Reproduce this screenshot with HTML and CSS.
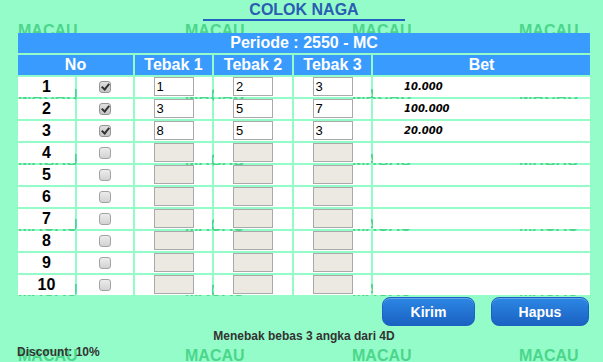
FILE: index.html
```html
<!DOCTYPE html>
<html lang="id">
<head>
<meta charset="utf-8">
<title>Colok Naga</title>
<link rel="stylesheet" href="styles.css">
</head>
<body>
<div class="watermark" aria-hidden="true">
  <span>MACAU</span><span>MACAU</span><span>MACAU</span><span>MACAU</span>
  <span>MACAU</span><span>MACAU</span><span>MACAU</span><span>MACAU</span>
  <span>MACAU</span><span>MACAU</span><span>MACAU</span><span>MACAU</span>
  <span>MACAU</span><span>MACAU</span><span>MACAU</span><span>MACAU</span>
  <span>MACAU</span><span>MACAU</span><span>MACAU</span><span>MACAU</span>
  <span>MACAU</span><span>MACAU</span><span>MACAU</span><span>MACAU</span>
</div>
<main class="wrap">
  <h1 class="title">COLOK NAGA</h1>
  <table class="bets">
    <colgroup>
      <col class="c-no"><col class="c-chk"><col class="c-t1"><col class="c-t2"><col class="c-t3"><col class="c-bet">
    </colgroup>
    <thead>
      <tr><th colspan="6">Periode : 2550 - MC</th></tr>
      <tr><th colspan="2">No</th><th>Tebak 1</th><th>Tebak 2</th><th>Tebak 3</th><th>Bet</th></tr>
    </thead>
    <tbody>
      <tr><td class="num">1</td><td class="chk"><input type="checkbox" checked></td><td class="in"><input type="text" value="1"></td><td class="in"><input type="text" value="2"></td><td class="in"><input type="text" value="3"></td><td class="bet">10.000</td></tr>
      <tr><td class="num">2</td><td class="chk"><input type="checkbox" checked></td><td class="in"><input type="text" value="3"></td><td class="in"><input type="text" value="5"></td><td class="in"><input type="text" value="7"></td><td class="bet">100.000</td></tr>
      <tr><td class="num">3</td><td class="chk"><input type="checkbox" checked></td><td class="in"><input type="text" value="8"></td><td class="in"><input type="text" value="5"></td><td class="in"><input type="text" value="3"></td><td class="bet">20.000</td></tr>
      <tr><td class="num">4</td><td class="chk"><input type="checkbox"></td><td class="in"><input type="text" disabled></td><td class="in"><input type="text" disabled></td><td class="in"><input type="text" disabled></td><td class="bet"></td></tr>
      <tr><td class="num">5</td><td class="chk"><input type="checkbox"></td><td class="in"><input type="text" disabled></td><td class="in"><input type="text" disabled></td><td class="in"><input type="text" disabled></td><td class="bet"></td></tr>
      <tr><td class="num">6</td><td class="chk"><input type="checkbox"></td><td class="in"><input type="text" disabled></td><td class="in"><input type="text" disabled></td><td class="in"><input type="text" disabled></td><td class="bet"></td></tr>
      <tr><td class="num">7</td><td class="chk"><input type="checkbox"></td><td class="in"><input type="text" disabled></td><td class="in"><input type="text" disabled></td><td class="in"><input type="text" disabled></td><td class="bet"></td></tr>
      <tr><td class="num">8</td><td class="chk"><input type="checkbox"></td><td class="in"><input type="text" disabled></td><td class="in"><input type="text" disabled></td><td class="in"><input type="text" disabled></td><td class="bet"></td></tr>
      <tr><td class="num">9</td><td class="chk"><input type="checkbox"></td><td class="in"><input type="text" disabled></td><td class="in"><input type="text" disabled></td><td class="in"><input type="text" disabled></td><td class="bet"></td></tr>
      <tr><td class="num">10</td><td class="chk"><input type="checkbox"></td><td class="in"><input type="text" disabled></td><td class="in"><input type="text" disabled></td><td class="in"><input type="text" disabled></td><td class="bet"></td></tr>
    </tbody>
  </table>
  <div class="actions">
    <button type="button" class="btn btn-kirim">Kirim</button>
    <button type="button" class="btn btn-hapus">Hapus</button>
  </div>
  <p class="note">Menebak bebas 3 angka dari 4D</p>
  <p class="discount">Discount: 10%</p>
</main>
</body>
</html>
```

FILE: styles.css
```css
html, body {
  margin: 0;
  padding: 0;
}
body {
  background: #94fcc9;
  font-family: "Liberation Sans", Arial, sans-serif;
  width: 603px;
  height: 362px;
  overflow: hidden;
  position: relative;
}
.watermark {
  position: absolute;
  top: 0;
  left: 0;
  right: 0;
  bottom: 0;
  overflow: hidden;
  padding: 23px 0 0 18px;
  display: grid;
  grid-template-columns: repeat(4, 167px);
  grid-auto-rows: 65px;
  z-index: 0;
}
.watermark span {
  font: bold 16px/16px "Liberation Sans", Arial, sans-serif;
  color: #4cd68c;
  white-space: nowrap;
}
.wrap {
  position: relative;
  z-index: 1;
  margin-left: 16px;
  width: 576px;
}
.title {
  margin: 0 auto;
  padding-top: 1px;
  width: 202px;
  height: 18px;
  border-bottom: 2px solid #2460bf;
  font-size: 16px;
  line-height: 18px;
  font-weight: bold;
  text-align: center;
  color: #2a5db3;
}
.bets {
  margin-top: 10px;
  width: 576px;
  border-collapse: separate;
  border-spacing: 2px;
  table-layout: fixed;
}
.c-no { width: 57px; }
.c-chk { width: 56px; }
.c-t1 { width: 77px; }
.c-t2 { width: 78px; }
.c-t3 { width: 77px; }
.c-bet { width: 217px; }
.bets th, .bets td {
  padding: 0;
  height: 20px;
  line-height: 20px;
}
.bets th {
  background: #3a9bff;
  color: #fff;
  font-size: 16px;
  font-weight: bold;
  text-align: center;
}
.bets td {
  background: #fff;
}
.num {
  text-align: center;
  font-size: 16px;
  font-weight: bold;
  color: #000;
}
.chk {
  vertical-align: top;
}
.chk input {
  appearance: none;
  -webkit-appearance: none;
  display: block;
  box-sizing: border-box;
  width: 12px;
  height: 12px;
  margin: 4px 0 0 22px;
  border: 1px solid #a3a3a3;
  border-radius: 3px;
  background: linear-gradient(#ececec, #d2d2d2);
  position: relative;
}
.chk input:checked {
  background: linear-gradient(#e0e0e0, #c4c4c4);
  border-color: #959595;
}
.chk input:checked::after {
  content: "";
  position: absolute;
  left: 3px;
  top: 0px;
  width: 3px;
  height: 6px;
  border-right: 2px solid #333;
  border-bottom: 2px solid #333;
  transform: rotate(40deg);
}
.in {
  vertical-align: top;
}
.in input {
  display: block;
  box-sizing: border-box;
  width: 40px;
  height: 19px;
  margin: 0 auto;
  padding: 0 2px;
  border: 1px solid #a9a9a9;
  background: #fff;
  font: 13px "Liberation Sans", Arial, sans-serif;
  color: #000;
}
.in input:disabled {
  background: #ebe9e2;
  border-color: #a9a9a9;
}
.bet {
  padding-left: 31px !important;
  font: italic bold 10px/20px "DejaVu Sans", Verdana, sans-serif;
  color: #000;
}
.actions {
  display: flex;
  justify-content: flex-end;
  gap: 16px;
  padding-right: 3px;
}
.btn {
  height: 29px;
  border: 1px solid #1d62c2;
  border-radius: 8px;
  background: linear-gradient(#2d87e4, #1a61c2);
  color: #fff;
  font: bold 14px "Liberation Sans", Arial, sans-serif;
  padding: 0;
  box-shadow: inset 0 1px 0 rgba(255,255,255,0.25);
}
.btn-kirim { width: 93px; }
.btn-hapus { width: 98px; }
.note {
  margin: 3px 0 0;
  text-align: center;
  font-size: 12px;
  font-weight: bold;
  color: #333;
}
.discount {
  margin: 2px 0 0;
  padding-left: 1px;
  font-size: 12px;
  font-weight: bold;
  color: #333;
}
```
